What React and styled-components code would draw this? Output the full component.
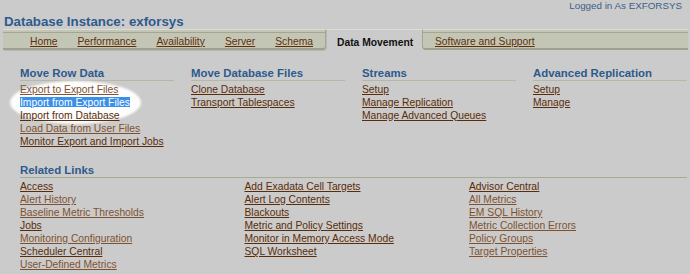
import React from "react";
import styled, { createGlobalStyle } from "styled-components";

const Global = createGlobalStyle`
  html, body { margin: 0; padding: 0; background: #cbcbcb; }
  body { font-family: "Liberation Sans", Arial, sans-serif; }
`;

const Page = styled.div`
  width: 690px;
  height: 274px;
  overflow: hidden;
  background: #cbcbcb;
`;

const Header = styled.header`
  padding: 0 8px 0 4px;
`;

const LoggedIn = styled.div`
  text-align: right;
  font-size: 9.8px;
  line-height: 12px;
  color: #3a5f8e;
`;

const Title = styled.h1`
  margin: 2px 0 0;
  font-size: 13.3px;
  line-height: 15px;
  font-weight: bold;
  color: #2f5b8c;
`;

const TabBar = styled.nav`
  display: flex;
  margin-left: 3px;
  width: 685px;
  height: 21px;
`;

const TabGroup = styled.div`
  box-sizing: border-box;
  height: 21px;
  display: flex;
  gap: 20px;
  padding: 4.5px 0 0 ${(p) => p.$padLeft}px;
  background: #c4c6b5;
  border-top: 1px solid #dcddd4;
  border-bottom: 2px solid #9ea18d;
  box-shadow: inset 0 2px 0 #c4c6b5, inset 0 3px 0 #a3a692;
  ${(p) => (p.$width ? `flex: 0 0 ${p.$width}px;` : "flex: 1;")}
  ${(p) =>
    p.$side === "left"
      ? `border-right: 1px solid #a3a692; border-bottom-right-radius: 4px; box-shadow: inset 0 2px 0 #c4c6b5, inset 0 3px 0 #a3a692, 1px 1px 0 #b9b9b2;`
      : `border-left: 1px solid #a3a692; border-bottom-left-radius: 4px;`}
`;

const TabLink = styled.a`
  font-size: 10.3px;
  line-height: 13px;
  color: #5f3008;
  text-decoration: underline;
  white-space: nowrap;
`;

const ActiveTab = styled.div`
  box-sizing: border-box;
  flex: 0 0 96px;
  height: 22px;
  padding: 5.5px 0 0 11px;
  font-size: 10.3px;
  line-height: 13px;
  font-weight: bold;
  color: #111;
  white-space: nowrap;
  border-top: 1px solid #dcddd4;
`;

const Content = styled.main`
  padding: 16.5px 3px 0 20px;
`;

const SectionGrid = styled.div`
  display: grid;
  grid-template-columns: repeat(4, 154px);
  column-gap: 17px;
`;

const Section = styled.section`
  position: relative;
`;

const SectionTitle = styled.h2`
  position: relative;
  margin: 0 0 2px;
  font-size: 11.4px;
  line-height: 13px;
  font-weight: bold;
  color: #2d5a8c;
  border-bottom: 1px solid ${(p) => (p.$strong ? "#a7ab93" : "#b6b8a6")};
  white-space: nowrap;
`;

const LinkList = styled.div`
  position: relative;
  z-index: 1;
  display: flex;
  flex-direction: column;
  align-items: flex-start;
`;

const Link = styled.a`
  font-size: 10.3px;
  line-height: 13px;
  color: ${(p) => (p.$visited ? "#7e5230" : "#5a2c08")};
  text-decoration: underline;
  white-space: nowrap;
`;

const Selected = styled.span`
  background: #3a8fe8;
  color: #fff;
  text-decoration: underline;
`;

const Halo = styled.div`
  position: absolute;
  left: -10px;
  top: 14.5px;
  width: 131px;
  height: 43px;
  border-radius: 50%;
  background: #fdfdfd;
  filter: blur(1.2px);
  z-index: 0;
`;

const Related = styled.section`
  margin-top: 16.5px;
`;

const RelatedGrid = styled.div`
  display: grid;
  grid-template-columns: 224.5px 224.5px 1fr;
`;

const sections = [
  {
    title: "Move Row Data",
    halo: true,
    links: [
      { t: "Export to Export Files", v: true },
      { t: "Import from Export Files", sel: true },
      { t: "Import from Database" },
      { t: "Load Data from User Files", v: true },
      { t: "Monitor Export and Import Jobs" },
    ],
  },
  {
    title: "Move Database Files",
    links: [{ t: "Clone Database" }, { t: "Transport Tablespaces" }],
  },
  {
    title: "Streams",
    links: [{ t: "Setup" }, { t: "Manage Replication" }, { t: "Manage Advanced Queues" }],
  },
  {
    title: "Advanced Replication",
    links: [{ t: "Setup" }, { t: "Manage" }],
  },
];

const related = [
  [
    { t: "Access" },
    { t: "Alert History", v: true },
    { t: "Baseline Metric Thresholds", v: true },
    { t: "Jobs" },
    { t: "Monitoring Configuration", v: true },
    { t: "Scheduler Central" },
    { t: "User-Defined Metrics", v: true },
  ],
  [
    { t: "Add Exadata Cell Targets" },
    { t: "Alert Log Contents" },
    { t: "Blackouts" },
    { t: "Metric and Policy Settings" },
    { t: "Monitor in Memory Access Mode" },
    { t: "SQL Worksheet" },
  ],
  [
    { t: "Advisor Central" },
    { t: "All Metrics", v: true },
    { t: "EM SQL History", v: true },
    { t: "Metric Collection Errors", v: true },
    { t: "Policy Groups", v: true },
    { t: "Target Properties", v: true },
  ],
];

const leftTabs = ["Home", "Performance", "Availability", "Server", "Schema"];

export default function App() {
  return (
    <Page>
      <Global />
      <Header>
        <LoggedIn>Logged in As EXFORSYS</LoggedIn>
        <Title>Database Instance: exforsys</Title>
      </Header>
      <TabBar>
        <TabGroup $side="left" $width={323} $padLeft={27}>
          {leftTabs.map((t) => (
            <TabLink key={t} href="#">{t}</TabLink>
          ))}
        </TabGroup>
        <ActiveTab>Data Movement</ActiveTab>
        <TabGroup $side="right" $padLeft={12}>
          <TabLink href="#">Software and Support</TabLink>
        </TabGroup>
      </TabBar>
      <Content>
        <SectionGrid>
          {sections.map((s) => (
            <Section key={s.title}>
              <SectionTitle>{s.title}</SectionTitle>
              {s.halo && <Halo />}
              <LinkList>
                {s.links.map((l) => (
                  <Link key={l.t} href="#" $visited={l.v}>
                    {l.sel ? <Selected>{l.t}</Selected> : l.t}
                  </Link>
                ))}
              </LinkList>
            </Section>
          ))}
        </SectionGrid>
        <Related>
          <SectionTitle $strong>Related Links</SectionTitle>
          <RelatedGrid>
            {related.map((col, i) => (
              <LinkList key={i}>
                {col.map((l) => (
                  <Link key={l.t} href="#" $visited={l.v}>{l.t}</Link>
                ))}
              </LinkList>
            ))}
          </RelatedGrid>
        </Related>
      </Content>
    </Page>
  );
}
